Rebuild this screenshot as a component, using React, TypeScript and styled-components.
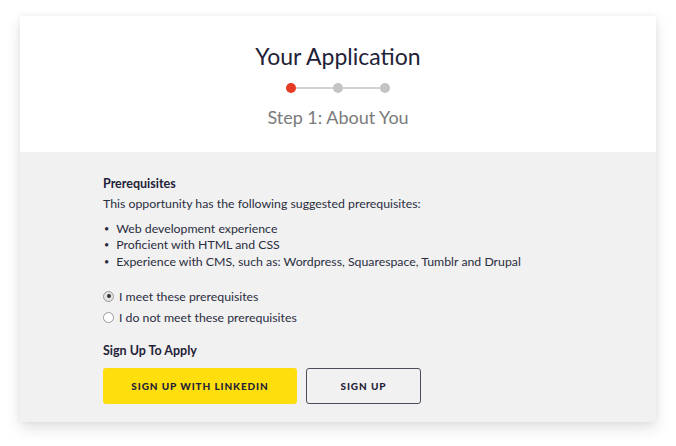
import React from "react";
import styled, { createGlobalStyle } from "styled-components";

const Global = createGlobalStyle`
  html, body { margin: 0; padding: 0; background: #ffffff; }
  body { font-family: "Lato", "Open Sans", Arial, sans-serif; color: #1f2238; }
  * { box-sizing: border-box; }
`;

const Page = styled.div`
  padding: 16px 20px 25px;
`;

const Card = styled.div`
  background: #f1f1f1;
  box-shadow: 0 6px 14px rgba(0, 0, 0, 0.12), 0 0 6px rgba(0, 0, 0, 0.05);
`;

const Header = styled.header`
  background: #ffffff;
  height: 136px;
  display: flex;
  flex-direction: column;
  align-items: center;
  padding-top: 25px;
`;

const Title = styled.h1`
  margin: 0;
  font-size: 23px;
  line-height: 30px;
  font-weight: 400;
  color: #1f2238;
`;

const Stepper = styled.div`
  display: flex;
  align-items: center;
  margin-top: 12px;
`;

const Dot = styled.span<{ $active?: boolean }>`
  width: 10px;
  height: 10px;
  border-radius: 50%;
  background: ${(p) => (p.$active ? "#e63a22" : "#c4c4c4")};
`;

const Line = styled.span`
  width: 37px;
  height: 2px;
  background: #d2d2d2;
`;

const Step = styled.div`
  margin-top: 13px;
  font-size: 18px;
  line-height: 22px;
  color: #7a7a7a;
`;

const Body = styled.section`
  padding: 24px 83px 18px;
`;

const Heading = styled.h2`
  margin: 0;
  font-size: 12.5px;
  line-height: 16px;
  font-weight: 700;
  color: #1f2238;
`;

const Text = styled.p`
  margin: 3px 0 0;
  font-size: 12.3px;
  line-height: 17px;
  color: #2a2d40;
`;

const List = styled.ul`
  margin: 9px 0 0;
  padding: 0;
  list-style: none;
`;

const Item = styled.li`
  font-size: 12.3px;
  line-height: 16.3px;
  color: #2a2d40;
  display: flex;
  gap: 7px;
  &::before {
    content: "•";
    font-size: 9px;
    padding-left: 1px;
  }
`;

const Radios = styled.div`
  margin-top: 18px;
  display: flex;
  flex-direction: column;
  gap: 4px;
`;

const RadioRow = styled.label`
  display: flex;
  align-items: center;
  gap: 5px;
  font-size: 12.3px;
  line-height: 17px;
  color: #2a2d40;
`;

const RadioCircle = styled.span<{ $checked?: boolean }>`
  width: 11px;
  height: 11px;
  border-radius: 50%;
  border: 1px solid #9a9a9a;
  background: ${(p) => (p.$checked ? "#e4e4e6" : "#ffffff")};
  display: inline-flex;
  align-items: center;
  justify-content: center;
  &::after {
    content: "";
    width: 4px;
    height: 4px;
    border-radius: 50%;
    background: ${(p) => (p.$checked ? "#333" : "transparent")};
  }
`;

const SubHeading = styled(Heading)`
  margin-top: 17px;
`;

const Buttons = styled.div`
  margin-top: 9px;
  display: flex;
  gap: 9px;
`;

const Button = styled.button<{ $primary?: boolean }>`
  height: 36px;
  width: ${(p) => (p.$primary ? "194px" : "115px")};
  border-radius: 3px;
  border: ${(p) => (p.$primary ? "none" : "1px solid #4a4d5e")};
  background: ${(p) => (p.$primary ? "#ffde0e" : "transparent")};
  font-family: inherit;
  font-size: 10px;
  font-weight: 900;
  letter-spacing: 0.9px;
  color: #1f2238;
  cursor: pointer;
`;

export default function App() {
  return (
    <>
      <Global />
      <Page>
        <Card>
          <Header>
            <Title>Your Application</Title>
            <Stepper>
              <Dot $active />
              <Line />
              <Dot />
              <Line />
              <Dot />
            </Stepper>
            <Step>Step 1: About You</Step>
          </Header>
          <Body>
            <Heading>Prerequisites</Heading>
            <Text>This opportunity has the following suggested prerequisites:</Text>
            <List>
              <Item>Web development experience</Item>
              <Item>Proficient with HTML and CSS</Item>
              <Item>Experience with CMS, such as: Wordpress, Squarespace, Tumblr and Drupal</Item>
            </List>
            <Radios>
              <RadioRow>
                <RadioCircle $checked />I meet these prerequisites
              </RadioRow>
              <RadioRow>
                <RadioCircle />I do not meet these prerequisites
              </RadioRow>
            </Radios>
            <SubHeading>Sign Up To Apply</SubHeading>
            <Buttons>
              <Button $primary>SIGN UP WITH LINKEDIN</Button>
              <Button>SIGN UP</Button>
            </Buttons>
          </Body>
        </Card>
      </Page>
    </>
  );
}
